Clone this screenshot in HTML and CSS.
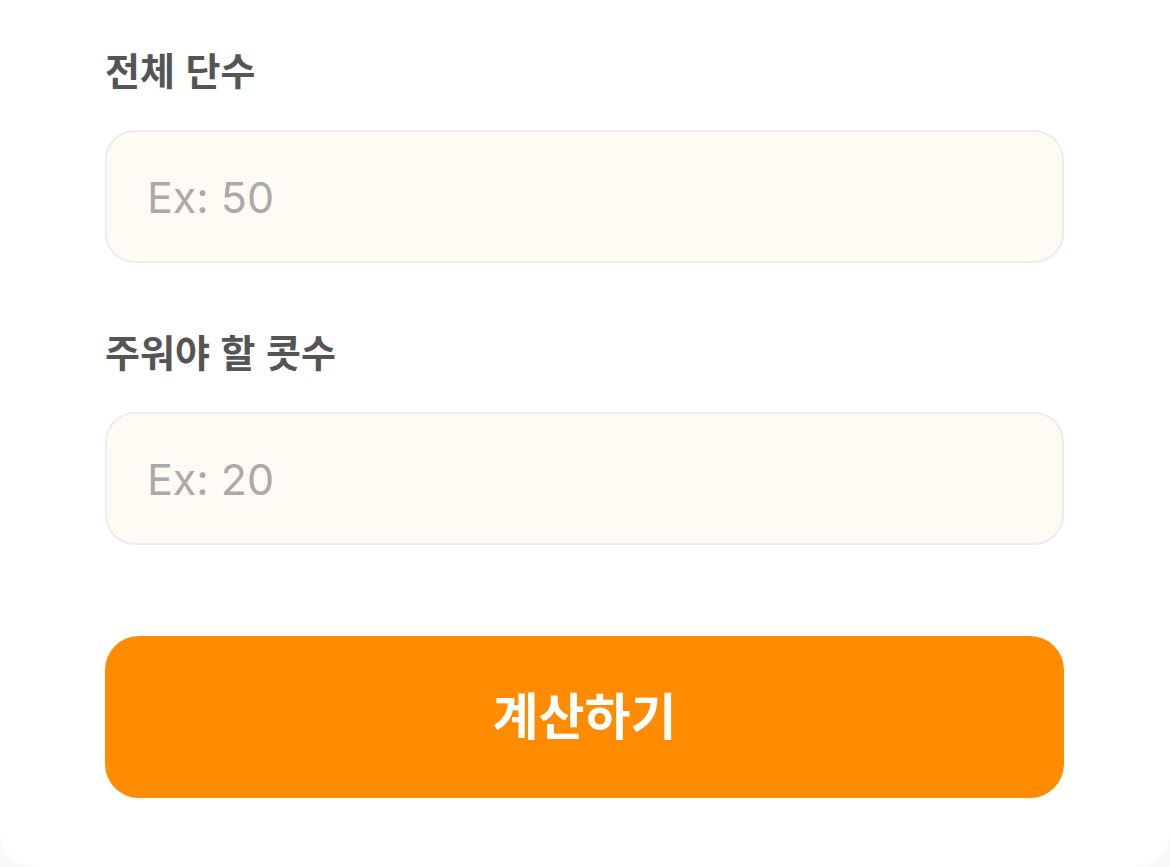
FILE: index.html
```html
<!DOCTYPE html>
<html lang="ko">
<head>
<meta charset="utf-8">
<title>콧수 계산</title>
<link rel="stylesheet" href="styles.css">
</head>
<body>
<main class="card">
  <form class="form">
    <div class="field">
      <label class="label" for="total">전체 단수</label>
      <input class="input" id="total" type="text" placeholder="Ex: 50">
    </div>
    <div class="field">
      <label class="label" for="pick">주워야 할 콧수</label>
      <input class="input" id="pick" type="text" placeholder="Ex: 20">
    </div>
    <button class="btn" type="button">계산하기</button>
  </form>
</main>
</body>
</html>
```
FILE: styles.css
```css
* { box-sizing: border-box; }
html, body { margin: 0; padding: 0; }
body {
  background: #fafaf9;
  font-family: "Noto Sans CJK KR", "Noto Sans", sans-serif;
}
.card {
  width: 1170px;
  height: 867px;
  background: #ffffff;
  border-radius: 0 0 36px 36px;
  padding: 47px 106px 0 105px;
}
.form {
  display: flex;
  flex-direction: column;
}
.field {
  display: flex;
  flex-direction: column;
}
.field + .field { margin-top: 66px; }
.label {
  font-size: 38px;
  line-height: 43px;
  font-weight: 700;
  color: #555555;
}
.input {
  margin-top: 40px;
  height: 133px;
  width: 100%;
  border: 2px solid #ececec;
  border-radius: 30px;
  background: #fffbf4;
  padding: 0 40px;
  font-family: Inter, "Noto Sans CJK KR", sans-serif;
  font-size: 43px;
  color: #333;
  outline: none;
}
.input::placeholder { color: #aaaaaa; }
.btn {
  margin-top: 91px;
  height: 162px;
  width: 100%;
  border: none;
  border-radius: 34px;
  background: #ff8c00;
  color: #ffffff;
  padding: 0 0 8px;
  font-family: "Noto Sans CJK KR", sans-serif;
  font-size: 50px;
  font-weight: 700;
}
```
